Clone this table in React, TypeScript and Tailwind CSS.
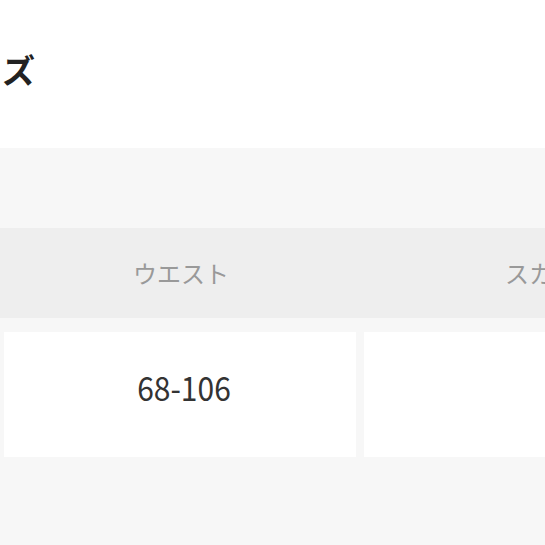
export default function App() {
  return (
    <div className="w-[545px] h-[545px] overflow-hidden bg-white font-['Noto_Sans_CJK_JP','Noto_Sans',sans-serif]">
      <div className="h-[148px] pt-[53px]">
        <h2 className="-ml-[63px] whitespace-nowrap text-[33px] font-bold leading-none text-[#222]">サイズ</h2>
      </div>
      <div className="h-[397px] bg-[#f7f7f7] pt-[80px]">
        <div className="flex h-[90px] w-[800px] items-center bg-[#eeeeee] text-[24px] text-[#999]">
          <div className="w-[362px] text-center">ウエスト</div>
          <div className="w-[382px] text-center">スカート</div>
        </div>
        <div className="mt-[14px] flex w-[800px] gap-[8px] pl-[4px]">
          <div className="flex h-[125px] w-[352px] items-center justify-center bg-white pb-[14px] pl-[8px] text-[30px] text-[#333]">
            <span className="inline-block scale-y-[1.1]">68-106</span>
          </div>
          <div className="h-[125px] w-[380px] bg-white" />
        </div>
      </div>
    </div>
  );
}
